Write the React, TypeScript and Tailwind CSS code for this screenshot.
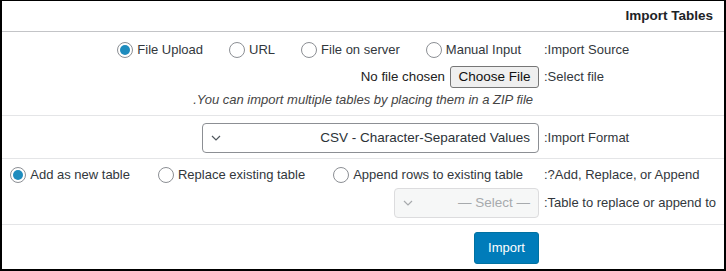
import React from "react";

function Radio({ checked }: { checked?: boolean }) {
  return (
    <span className="flex h-4 w-4 shrink-0 items-center justify-center rounded-full border border-[#8c8f94] bg-white">
      {checked && <span className="h-[10px] w-[10px] rounded-full bg-[#1e8cbe]" />}
    </span>
  );
}

function RadioItem({ label, checked }: { label: string; checked?: boolean }) {
  return (
    <span className="flex items-center gap-[4px]">
      <Radio checked={checked} />
      <span className="whitespace-nowrap">{label}</span>
    </span>
  );
}

function Chevron({ color }: { color: string }) {
  return (
    <svg width="10" height="6" viewBox="0 0 10 6" fill="none">
      <polyline points="1,1 5,5 9,1" stroke={color} strokeWidth="1.2" />
    </svg>
  );
}

export default function App() {
  return (
    <div
      className="box-border h-[271px] w-[726px] border-t border-r-2 border-b-2 border-l-2 border-black bg-white text-[13px] text-[#32373c]"
      style={{ fontFamily: '"Liberation Sans", Arial, sans-serif' }}
    >
      {/* header */}
      <div className="flex h-[31px] items-center justify-end border-b border-[#c3c4c7] pr-[11px]">
        <span className="text-[13.5px] font-bold text-[#1d2327]">Import Tables</span>
      </div>

      {/* Import source */}
      <div className="flex h-[84px] border-b border-[#e4e5e7]">
        <div className="flex flex-1 flex-col items-end pt-[8px]">
          <div className="flex h-[20px] items-center gap-[26px] pr-[18px]">
            <RadioItem label="File Upload" checked />
            <RadioItem label="URL" />
            <RadioItem label="File on server" />
            <RadioItem label="Manual Input" />
          </div>
          <div className="mt-[6px] flex h-[22px] items-center gap-[5px]">
            <span className="text-[13.3px] text-[#222]">No file chosen</span>
            <span className="flex h-[22px] w-[89px] items-center justify-center rounded-[3px] border border-[#767676] bg-[#efefef] text-[13.5px] text-[#111]">
              Choose File
            </span>
          </div>
          <div className="mt-[3px] flex h-[18px] items-center pr-[6px] italic text-[#444]">
            .You can import multiple tables by placing them in a ZIP file
          </div>
        </div>
        <div className="w-[185px] pl-[5px] pt-[8px]">
          <div className="flex h-[20px] items-center">:Import Source</div>
          <div className="mt-[6px] flex h-[22px] items-center">:Select file</div>
        </div>
      </div>

      {/* Import format */}
      <div className="flex h-[43px] border-b border-[#e4e5e7]">
        <div className="flex flex-1 justify-end pt-[7px]">
          <div className="flex h-[30px] w-[337px] items-center justify-between rounded-[4px] border border-[#8c8f94] bg-white pl-[8px] pr-[8px]">
            <Chevron color="#50575e" />
            <span className="text-[13.5px] text-[#2c3338]">CSV - Character-Separated Values</span>
          </div>
        </div>
        <div className="flex w-[185px] items-start pl-[5px] pt-[7px]">
          <div className="flex h-[30px] items-center">:Import Format</div>
        </div>
      </div>

      {/* Add / replace / append */}
      <div className="flex h-[66px] border-b border-[#e4e5e7]">
        <div className="flex flex-1 flex-col items-end pt-[6px]">
          <div className="flex h-[20px] items-center gap-[28px] pr-[16px]">
            <RadioItem label="Add as new table" checked />
            <RadioItem label="Replace existing table" />
            <RadioItem label="Append rows to existing table" />
          </div>
          <div className="mt-[3px] flex h-[30px] w-[145px] items-center justify-between rounded-[4px] border border-[#dcdcde] bg-[#f6f7f7] pl-[8px] pr-[8px]">
            <Chevron color="#a7aaad" />
            <span className="text-[13.5px] text-[#a7aaad]">— Select —</span>
          </div>
        </div>
        <div className="w-[185px] pl-[5px] pt-[6px]">
          <div className="flex h-[20px] items-center whitespace-nowrap">:?Add, Replace, or Append</div>
          <div className="mt-[3px] flex h-[30px] items-center whitespace-nowrap">:Table to replace or append to</div>
        </div>
      </div>

      {/* Import button */}
      <div className="flex h-[44px]">
        <div className="flex flex-1 justify-end pt-[7px]">
          <span className="flex h-[32px] w-[65px] items-center justify-center rounded-[3px] border border-[#0071a1] bg-[#007cba] text-[13px] text-white">
            Import
          </span>
        </div>
        <div className="w-[185px]" />
      </div>
    </div>
  );
}
